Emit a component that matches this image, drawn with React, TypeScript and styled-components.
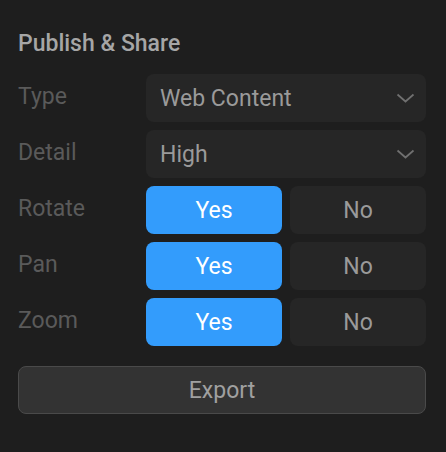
import React from "react";
import styled, { createGlobalStyle } from "styled-components";

const GlobalStyle = createGlobalStyle`
  html, body {
    margin: 0;
    padding: 0;
    background: #1e1e1e;
  }
`;

const Panel = styled.div`
  width: 446px;
  height: 452px;
  box-sizing: border-box;
  padding: 30px 20px 0 18px;
  background: #1e1e1e;
  font-family: Roboto, "Noto Sans", sans-serif;
  display: flex;
  flex-direction: column;
`;

const Title = styled.h2`
  margin: 0 0 16px;
  font-size: 23px;
  line-height: 28px;
  font-weight: 500;
  color: #a6a6a6;
`;

const Rows = styled.div`
  display: flex;
  flex-direction: column;
  gap: 8px;
`;

const Row = styled.div`
  display: grid;
  grid-template-columns: 128px 1fr;
  align-items: center;
  height: 48px;
`;

const Label = styled.span`
  font-size: 23px;
  color: #5a5a5a;
  margin-top: -4px;
`;

const Select = styled.div`
  height: 48px;
  border-radius: 8px;
  background: #262626;
  display: flex;
  align-items: center;
  justify-content: space-between;
  padding: 0 11px 0 14px;
  font-size: 23px;
  color: #9a9a9a;
`;

const Toggle = styled.div`
  display: grid;
  grid-template-columns: 1fr 1fr;
  gap: 8px;
  height: 48px;
`;

const ToggleButton = styled.button<{ $active?: boolean }>`
  border: none;
  border-radius: 8px;
  font-family: inherit;
  font-size: 23px;
  background: ${({ $active }) => ($active ? "#339cfc" : "#262626")};
  color: ${({ $active }) => ($active ? "#ffffff" : "#9a9a9a")};
`;

const ExportButton = styled.button`
  margin-top: 20px;
  height: 48px;
  border: 1px solid #4a4a4a;
  border-radius: 8px;
  background: #333333;
  color: #a0a0a0;
  font-family: inherit;
  font-size: 23px;
`;

const Chevron = () => (
  <svg width="19" height="10" viewBox="0 0 19 10" fill="none">
    <path d="M1.5 1.5l8 7 8-7" stroke="#707070" strokeWidth="1.7" />
  </svg>
);

const toggles = ["Rotate", "Pan", "Zoom"];

export default function App() {
  return (
    <>
      <GlobalStyle />
      <Panel>
        <Title>Publish &amp; Share</Title>
        <Rows>
          <Row>
            <Label>Type</Label>
            <Select>
              Web Content
              <Chevron />
            </Select>
          </Row>
          <Row>
            <Label>Detail</Label>
            <Select>
              High
              <Chevron />
            </Select>
          </Row>
          {toggles.map((t) => (
            <Row key={t}>
              <Label>{t}</Label>
              <Toggle>
                <ToggleButton $active>Yes</ToggleButton>
                <ToggleButton>No</ToggleButton>
              </Toggle>
            </Row>
          ))}
        </Rows>
        <ExportButton>Export</ExportButton>
      </Panel>
    </>
  );
}
